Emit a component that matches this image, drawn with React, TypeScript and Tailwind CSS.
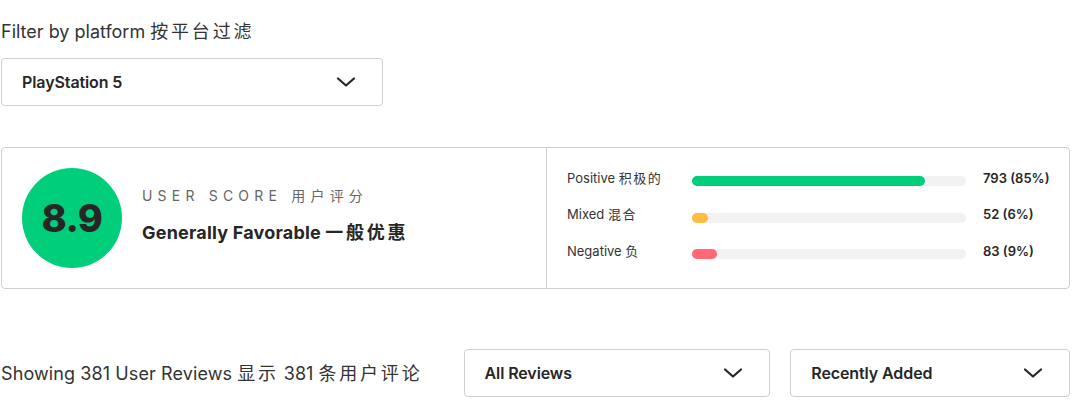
import React from "react";

const font = { fontFamily: "Inter, 'Noto Sans CJK SC', sans-serif" };

function Chevron() {
  return (
    <svg width="20" height="12" viewBox="0 0 20 12" fill="none">
      <path d="M2 2.5 L10 9.5 L18 2.5" stroke="#262626" strokeWidth="2.2" strokeLinecap="round" strokeLinejoin="round" />
    </svg>
  );
}

function Select({ label, className }: { label: string; className: string }) {
  return (
    <div className={`h-[48px] flex items-center justify-between rounded-[4px] border border-[#cfcfcf] bg-white pl-[20px] pr-[26px] ${className}`}>
      <span className="text-[16px] font-semibold text-[#262626] tracking-[-0.1px]">{label}</span>
      <Chevron />
    </div>
  );
}

function Bar({ label, cjk, value, pct, color }: { label: string; cjk: string; value: string; pct: number; color: string }) {
  return (
    <div className="flex items-center h-[36.5px]">
      <div className="w-[125px] text-[13px] text-[#333]">
        {label} <span className="tracking-[1.5px]">{cjk}</span>
      </div>
      <div className="w-[274px] h-[10px] rounded-full bg-[#f2f2f2] mt-[6px]">
        <div className={`h-full rounded-full ${color}`} style={{ width: `${pct}%` }} />
      </div>
      <div className="ml-[17px] text-[13px] font-semibold text-[#262626]">{value}</div>
    </div>
  );
}

export default function App() {
  return (
    <div className="w-[1076px] h-[416px] bg-white pl-px pr-[6px] pt-[19px]" style={font}>
      <div className="text-[18px] text-[#333] leading-[26px]">
        Filter by platform <span className="tracking-[2.8px]">按平台过滤</span>
      </div>
      <Select label="PlayStation 5" className="w-[382px] mt-[13px]" />
      <div className="mt-[41px] h-[142px] flex rounded-[4px] border border-[#cfcfcf]">
        <div className="w-[545px] flex items-center pl-[20px] border-r border-[#cfcfcf]">
          <div className="w-[100px] h-[100px] rounded-full bg-[#00ce7a] flex items-center justify-center">
            <span className="text-[38px] font-extrabold text-[#262626] tracking-[-0.5px]">8.9</span>
          </div>
          <div className="ml-[20px] flex flex-col pb-[6px]">
            <div className="text-[14px] text-[#666] tracking-[5.2px] leading-[20px]">USER SCORE 用户评分</div>
            <div className="mt-[15px] text-[18px] font-bold text-[#262626] leading-[24px]">
              <span className="tracking-[0.2px]">Generally Favorable</span> <span className="tracking-[2.8px]">一般优惠</span>
            </div>
          </div>
        </div>
        <div className="flex-1 pl-[20px] pt-[12px]">
          <Bar label="Positive" cjk="积极的" value="793 (85%)" pct={85} color="bg-[#00ce7a]" />
          <Bar label="Mixed" cjk="混合" value="52 (6%)" pct={6} color="bg-[#ffbd3f]" />
          <Bar label="Negative" cjk="负" value="83 (9%)" pct={9} color="bg-[#ff6874]" />
        </div>
      </div>
      <div className="mt-[60px] flex items-center">
        <div className="w-[463px] text-[18px] text-[#333]">
          <span className="tracking-[0.1px]">Showing 381 User Reviews</span> <span className="tracking-[2.8px]">显示</span> 381 <span className="tracking-[2.8px]">条用户评论</span>
        </div>
        <Select label="All Reviews" className="w-[307px]" />
        <Select label="Recently Added" className="w-[280px] ml-[20px]" />
      </div>
    </div>
  );
}
